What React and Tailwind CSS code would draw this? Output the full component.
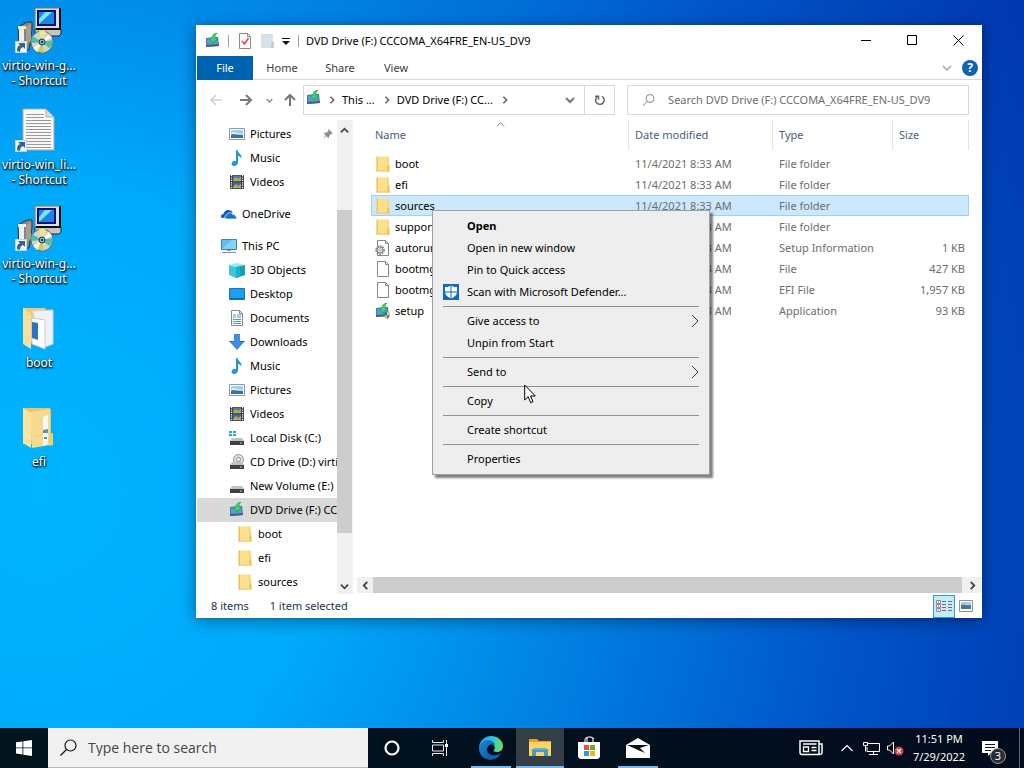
import React from 'react';

function Icon({ size = 16, className = '', children }) {
  return (
    <svg width={size} height={size} viewBox="0 0 16 16" className={`shrink-0 ${className}`} aria-hidden="true">
      {children}
    </svg>
  );
}

function FolderIcon() {
  return (
    <Icon>
      <path d="M1.500.5h12l1 9.500v5.500h-13z" fill="#fbe08d" />
      <path d="M1.500.5H3v15H1.500z" fill="#e9c766" />
      <path d="M1.500 14.500h13v1h-13z" fill="#e9c96f" />
      <path d="M12 15.500V10l2.500-1v6.500z" fill="#f0c75d" />
      <path d="M12.500.5h1v9h-1z" fill="#f0cf74" />
    </Icon>
  );
}

function DriveArrowIcon({ shield, className }) {
  return (
    <Icon className={className}>
      <path d="M1 5l12-1 1 9-13 1z" fill="#3d7cba" />
      <path d="M2 6l10-1 1 7-11 1z" fill="#5b9ad2" />
      <path d="M1 12l13-1v2L1 14z" fill="#46617a" />
      <path d="M12 0C9 .5 7 2 7 5H4l4 5 5-5h-3c0-2 0-3 2-5z" fill="#3fd56a" stroke="#178c45" strokeWidth=".6" />
      {shield && (
        <>
          <path d="M9 10l3-1.500 3 1.500c0 3-1 5-3 6-2-1-3-3-3-6z" fill="#2f6cc4" />
          <path d="M12 8.500l3 1.500c0 1 0 2-.5 2.500H12zM9.500 12.500H12V16c-1.500-.8-2.200-2-2.500-3.500z" fill="#f2ce4a" />
        </>
      )}
    </Icon>
  );
}

function PictureIcon() {
  return (
    <Icon>
      <path d="M.5 2.500h15v11H.5z" fill="#fff" stroke="#8d9aa3" />
      <path d="M2 4h12v8H2z" fill="#9bd0f2" />
      <path d="M2 9c3-3 5 0 12-1v4H2z" fill="#3f6f94" />
      <path d="M2 7c3-2 5 0 7 0l5 1v1L2 8z" fill="#d9eefa" />
    </Icon>
  );
}

function MusicIcon() {
  return (
    <Icon>
      <path d="M7 0h1.500c0 3 5 4 4 9-.5-2-2-3-3.500-3v6c0 2-1.500 4-4 4-1.500 0-2.500-1-2.500-2.200C2.500 12 4 10.500 7 11z" fill="#2296dd" />
    </Icon>
  );
}

function VideoIcon() {
  return (
    <Icon>
      <path d="M1 1h14v14H1z" fill="#3a3f45" />
      <path d="M4 1.500h8v6H4z" fill="#5578b5" />
      <path d="M4 8.500h8v6H4z" fill="#4968a5" />
      <path d="M4 6l3-3 2 2 3-2v4H4zM4 13l3-3 2 2 3-2v4H4z" fill="#b8ab45" />
      <path d="M2.500 1v14M13.500 1v14" stroke="#fff" strokeWidth="1.200" strokeDasharray="1.200 1.200" />
    </Icon>
  );
}

function OneDriveIcon() {
  return (
    <Icon>
      <path d="M1 12c-2-1-1-4 1.500-4C3 5 6 3 9 4.500 11 5 11.500 6 11.500 7L5 12z" fill="#0f5fb8" />
      <path d="M6 13c-2.500 0-3-3.500-.3-4 1-3 5-3 6-.5 1.500-.5 2.500.3 2.500 1.500 2 .5 2 3-.2 3z" fill="#1673ce" stroke="#fff" strokeWidth=".7" />
    </Icon>
  );
}

function PcIcon() {
  return (
    <Icon>
      <path d="M.5 1.500h15v10H.5z" fill="#64bdf0" stroke="#3986b7" />
      <path d="M1 11L11 2h4v9z" fill="#87d2f8" />
      <path d="M6 12h4v1H6zM1 14h14v1H1z" fill="#7897a8" />
    </Icon>
  );
}

function CubeIcon() {
  return (
    <Icon>
      <path d="M0 3l8-2 8 2-8 2z" fill="#9eeaf0" />
      <path d="M0 3l7 2v11l-7-3z" fill="#42c5d8" />
      <path d="M7 5l9-2v10l-9 3z" fill="#169fb5" />
      <path d="M7 5l4-1v11l-4 1z" fill="#1bb4c6" />
    </Icon>
  );
}

function DesktopIcon() {
  return (
    <Icon>
      <path d="M.5 2.500h15v11H.5z" fill="#1e9df2" stroke="#1579bf" />
      <path d="M1 12h14v1.500H1z" fill="#0f69ab" />
    </Icon>
  );
}

function DocumentIcon() {
  return (
    <Icon>
      <path d="M2.500.5h8l3 3v12h-11z" fill="#fff" stroke="#7f8b93" />
      <path d="M10.500.5v3h3" fill="none" stroke="#7f8b93" />
      <path d="M4 5h3M8 5h4M4 7h3M8 7h4M4 9.500h8M4 11.500h8M4 13.500h8" stroke="#4f99b9" />
    </Icon>
  );
}

function DownloadIcon() {
  return (
    <Icon>
      <path d="M5 0h6v7h5l-8 9-8-9h5z" fill="#3b8fe0" />
      <path d="M0 7h5v1H1zM11 7h5l-1 1h-4z" fill="#2b6aa8" />
    </Icon>
  );
}

function DiskIcon({ kind }) {
  return (
    <Icon>
      {kind === 'system' && <path d="M0 1h3v2H0zM4 1h3v2H4zM0 4h3v2H0zM4 4h3v2H4z" fill="#27a9c7" />}
      {kind === 'cd' && (
        <>
          <circle cx="9.500" cy="5.500" r="5" fill="#dcdcdc" stroke="#959595" />
          <circle cx="9.500" cy="5.500" r="2" fill="#fff" stroke="#8c8c8c" />
        </>
      )}
      <path d="M3 8h10l2 3H1z" fill="#bfc3c5" />
      <path d="M1 11h14v4H1z" fill="#3e4245" />
      <path d="M11 12.500h2v1h-2z" fill="#7ff09a" />
    </Icon>
  );
}

function FileIcon({ gear }) {
  return (
    <Icon>
      <path d="M2.500.5h8l3 3v12h-11z" fill="#fff" stroke="#858585" />
      <path d="M10.500.5v3h3" fill="none" stroke="#858585" />
      {gear && (
        <>
          <circle cx="5" cy="10" r="4" fill="#eee" stroke="#7a7a7a" strokeWidth="1.600" strokeDasharray="1.600 1" />
          <circle cx="5" cy="10" r="3" fill="#ddd" stroke="#8a8a8a" />
          <circle cx="5" cy="10" r="1.200" fill="#fff" stroke="#8a8a8a" strokeWidth=".6" />
        </>
      )}
    </Icon>
  );
}

function Chevron({ dir = 'down', size = 10, color = '#444', width = 2 }) {
  const paths = {
    down: 'M1 3l4 4 4-4',
    up: 'M1 7l4-4 4 4',
    left: 'M7 1L3 5l4 4',
    right: 'M3 1l4 4-4 4',
  };
  return (
    <svg width={size} height={size} viewBox="0 0 10 10" className="shrink-0" aria-hidden="true">
      <path d={paths[dir]} fill="none" stroke={color} strokeWidth={width} />
    </svg>
  );
}

function LargeIcon({ children }) {
  return (
    <svg width="48" height="48" viewBox="3 -1 48 48" className="shrink-0" aria-hidden="true">
      {children}
    </svg>
  );
}

function ShortcutBadge() {
  return (
    <>
      <path d="M3.500 34.500h11v11h-11z" fill="#f4f6f8" stroke="#c4d3df" />
      <path d="M5 44c0-4 1-5 3-6l-2-2h7v6l-2-2c-2 1-3 2-3 5z" fill="#31619f" />
    </>
  );
}

function InstallerIcon() {
  return (
    <LargeIcon>
      <path d="M6 20l9-5h5v8l-3 20H7z" fill="#858585" stroke="#333" />
      <path d="M6 19h8v3H6zM7 22h5v12H7z" fill="#eee" />
      <path d="M14 20l5-4v18l-5 4z" fill="#a79d93" />
      <path d="M23 22h26v5l-2 2H23z" fill="#c9c6c1" stroke="#222" />
      <path d="M23 1h25v21H23z" fill="#dedede" stroke="#777" />
      <path d="M48 1v21H24" fill="none" stroke="#111" strokeWidth="2" />
      <path d="M25 3h19v16H25z" fill="#07136e" />
      <path d="M27 5h15v12H27z" fill="#1687e8" />
      <path d="M27 17L40 5h-7l-6 7z" fill="#7de3ff" />
      <circle cx="30" cy="35" r="11" fill="#d3d3cb" stroke="#65645f" />
      <path d="M30 35l-3-11c3-1 5-1 7 1z" fill="#f0e68b" />
      <path d="M30 35L20 29l-1 7z" fill="#4bbcad" />
      <path d="M30 35l11-2c0 4-1 6-4 8z" fill="#56bda4" />
      <path d="M30 35l2 11-8-2z" fill="#c3cf5e" />
      <path d="M30 35l7-8 3 4z" fill="#fff" />
      <path d="M30 35l-9 6 4 4z" fill="#f4f4ff" />
      <circle cx="30" cy="35" r="3" fill="#5ac3dd" stroke="#333" />
      <circle cx="30" cy="35" r="1" fill="#111" />
      <ShortcutBadge />
    </LargeIcon>
  );
}

function TextFileIcon() {
  return (
    <LargeIcon>
      <path d="M11 3h23l8 8v33H11z" fill="#f8f8f7" stroke="#a9a9a9" />
      <path d="M34 3v8h8z" fill="#dcdcdc" stroke="#a9a9a9" />
      <path
        d="M14 8.500h18M14 11.500h18M14 14.500h25M14 17.500h25M14 20.500h25M14 23.500h25M14 26.500h25M14 29.500h25M14 32.500h25M14 35.500h25M14 38.500h25M14 41.500h25"
        stroke="#9a9a9a"
      />
      <ShortcutBadge />
    </LargeIcon>
  );
}

function BootFolderIcon() {
  return (
    <LargeIcon>
      <path d="M11 4h22l2 2v32H11z" fill="#eccb72" />
      <path d="M34 5h7v7h-7z" fill="#29b6a8" />
      <path d="M20 7l21-1v34l-8 3z" fill="#eef2f4" stroke="#ccd5da" />
      <path d="M20 14l13 2v29l-13-5z" fill="#fff" stroke="#c4cdd2" />
      <path d="M20 18l6 1v17l-6-2z" fill="#2b74bf" />
      <path d="M11 4l8 6v35l-8-5z" fill="#fae09a" />
    </LargeIcon>
  );
}

function EfiFolderIcon() {
  return (
    <LargeIcon>
      <path d="M11 5h27l1 2v34H11z" fill="#e9c468" />
      <path d="M18 9l20-3v36l-18 3z" fill="#f6da8d" />
      <path d="M31 14l5-2v29l-5 2z" fill="#f5f7f8" />
      <path d="M31 27l5-1v4h-5zM32 34h3v2h-3z" fill="#5097b5" />
      <path d="M37 31l4-1v12l-4 1z" fill="#f4ce69" />
      <path d="M11 5l8 5v35l-8-5z" fill="#fbe3a0" />
    </LargeIcon>
  );
}

const desktopItems = [
  { label: ['virtio-win-g...', '- Shortcut'], icon: <InstallerIcon /> },
  { label: ['virtio-win_li...', '- Shortcut'], icon: <TextFileIcon /> },
  { label: ['virtio-win-g...', '- Shortcut'], icon: <InstallerIcon /> },
  { label: ['boot'], icon: <BootFolderIcon /> },
  { label: ['efi'], icon: <EfiFolderIcon /> },
];

function DesktopIcons() {
  return (
    <div className="flex w-[78px] flex-col pt-1.5">
      {desktopItems.map((item, i) => (
        <button key={i} type="button" className="flex h-[99px] flex-col items-center">
          {item.icon}
          <span className="mt-1 whitespace-nowrap text-[12px] leading-[15px] text-white [text-shadow:0_1px_2px_#000,1px_1px_2px_#000]">
            {item.label.map((line) => (
              <span key={line} className="block">{line}</span>
            ))}
          </span>
        </button>
      ))}
    </div>
  );
}

function TitleBar() {
  return (
    <header className="flex h-[31px] shrink-0 items-center pr-px text-black">
      <DriveArrowIcon className="ml-[9px]" />
      <span className="ml-[7px] h-3 w-px bg-gray-400" />
      <button type="button" aria-label="Properties" className="ml-2">
        <Icon>
          <path d="M2.500.5h8l3 3v12h-11z" fill="#fff" stroke="#8a8a8a" />
          <path d="M10.500.5v3h3" fill="none" stroke="#8a8a8a" />
          <path d="M5 8l2.500 3L11.500 5" fill="none" stroke="#e0454a" strokeWidth="1.500" />
        </Icon>
      </button>
      <button type="button" aria-label="New folder" className="ml-[7px]">
        <Icon>
          <path d="M1 1h12v14H1z" fill="#d7e0ec" />
          <path d="M11 9h3v6h-3z" fill="#c4d0df" />
        </Icon>
      </button>
      <button type="button" aria-label="Customize Quick Access Toolbar" className="ml-[5px]">
        <svg width="10" height="10" viewBox="0 0 10 10">
          <path d="M1 2h8v1H1zM1 5h8L5 9z" fill="#111" />
        </svg>
      </button>
      <span className="ml-[7px] h-3 w-px bg-gray-400" />
      <h1 className="ml-[7px] flex-1 truncate">DVD Drive (F:) CCCOMA_X64FRE_EN-US_DV9</h1>
      <button type="button" aria-label="Minimize" className="flex h-full w-[46px] items-center justify-center">
        <svg width="11" height="11"><path d="M0 5.500h10" stroke="#000" /></svg>
      </button>
      <button type="button" aria-label="Maximize" className="flex h-full w-[46px] items-center justify-center">
        <svg width="11" height="11"><path d="M.5.5h9v9h-9z" fill="none" stroke="#000" /></svg>
      </button>
      <button type="button" aria-label="Close" className="flex h-full w-[46px] items-center justify-center">
        <svg width="11" height="11"><path d="M.5.5l10 10M10.500.5l-10 10" stroke="#000" /></svg>
      </button>
    </header>
  );
}

function RibbonTabs() {
  return (
    <div className="flex h-6 shrink-0 items-stretch border-b border-[#dadbdc] pl-px text-[#3b3b3b]">
      <button type="button" className="-mb-px w-14 bg-[#0063b1] text-white">File</button>
      <button type="button" className="w-[58px]">Home</button>
      <button type="button" className="w-[58px]">Share</button>
      <button type="button" className="w-[54px]">View</button>
      <button type="button" aria-label="Expand the Ribbon" className="ml-auto mr-2.5">
        <Chevron color="#a5a5a5" width={1.5} />
      </button>
      <button type="button" aria-label="Help" className="mr-1 flex items-center">
        <span className="flex size-4 items-center justify-center rounded-full bg-[#0f63b5] text-[12px] font-bold text-white">?</span>
      </button>
    </div>
  );
}

function AddressRow() {
  return (
    <div className="flex h-10 shrink-0 items-center px-[13px]">
      <button type="button" aria-label="Back">
        <svg width="14" height="14"><path d="M13 7H2M7 2L2 7l5 5" fill="none" stroke="#d0d0d0" strokeWidth="1.500" /></svg>
      </button>
      <button type="button" aria-label="Forward" className="ml-4">
        <svg width="14" height="14"><path d="M1 7h11M7 2l5 5-5 5" fill="none" stroke="#777" strokeWidth="2" /></svg>
      </button>
      <button type="button" aria-label="Recent locations" className="ml-[13px]">
        <Chevron size={7} color="#888" />
      </button>
      <button type="button" aria-label="Up" className="ml-2.5">
        <svg width="14" height="14"><path d="M7 13V2M2 7l5-5 5 5" fill="none" stroke="#777" strokeWidth="2" /></svg>
      </button>
      <div className="ml-1.5 flex h-[30px] min-w-0 flex-[312] items-center border border-[#d9d9d9] text-black">
        <DriveArrowIcon className="ml-0.5 mb-1" />
        <span className="ml-1.5"><Chevron dir="right" size={8} color="#666" /></span>
        <button type="button" className="ml-1.5 whitespace-nowrap">This ...</button>
        <span className="ml-2"><Chevron dir="right" size={8} color="#666" /></span>
        <button type="button" className="ml-1.5 whitespace-nowrap">DVD Drive (F:) CC...</button>
        <span className="ml-2"><Chevron dir="right" size={8} color="#666" /></span>
        <button type="button" aria-label="Previous locations" className="ml-auto mr-[9px]">
          <Chevron color="#777" />
        </button>
        <button type="button" aria-label="Refresh" className="flex h-full w-[30px] items-center justify-center border-l border-[#d9d9d9]">
          <svg width="12" height="12" viewBox="0 0 12 12">
            <path d="M3.500 2.500A4.300 4.300 0 1 0 8 2.300" fill="none" stroke="#666" strokeWidth="1.500" />
            <path d="M1 2.200h3.500v3.500" fill="none" stroke="#666" strokeWidth="1.500" />
          </svg>
        </button>
      </div>
      <label className="ml-3 flex h-[30px] min-w-0 flex-[342] items-center border border-[#d9d9d9]">
        <svg width="14" height="14" className="ml-3.5 shrink-0">
          <circle cx="8" cy="5.500" r="4" fill="none" stroke="#888" />
          <path d="M5 8.500L1 13" stroke="#888" />
        </svg>
        <input
          type="text"
          aria-label="Search"
          placeholder="Search DVD Drive (F:) CCCOMA_X64FRE_EN-US_DV9"
          className="ml-3 min-w-0 flex-1 bg-transparent outline-none placeholder:text-[#6d6d6d]"
        />
      </label>
    </div>
  );
}

const navItems = [
  { label: 'Pictures', icon: <PictureIcon />, level: 1, pinned: true },
  { label: 'Music', icon: <MusicIcon />, level: 1 },
  { label: 'Videos', icon: <VideoIcon />, level: 1 },
  { label: 'OneDrive', icon: <OneDriveIcon />, level: 0 },
  { label: 'This PC', icon: <PcIcon />, level: 0 },
  { label: '3D Objects', icon: <CubeIcon />, level: 1 },
  { label: 'Desktop', icon: <DesktopIcon />, level: 1 },
  { label: 'Documents', icon: <DocumentIcon />, level: 1 },
  { label: 'Downloads', icon: <DownloadIcon />, level: 1 },
  { label: 'Music', icon: <MusicIcon />, level: 1 },
  { label: 'Pictures', icon: <PictureIcon />, level: 1 },
  { label: 'Videos', icon: <VideoIcon />, level: 1 },
  { label: 'Local Disk (C:)', icon: <DiskIcon kind="system" />, level: 1 },
  { label: 'CD Drive (D:) virtio-win', icon: <DiskIcon kind="cd" />, level: 1 },
  { label: 'New Volume (E:)', icon: <DiskIcon />, level: 1 },
  { label: 'DVD Drive (F:) CCCOMA', icon: <DriveArrowIcon />, level: 1, selected: true },
  { label: 'boot', icon: <FolderIcon />, level: 2 },
  { label: 'efi', icon: <FolderIcon />, level: 2 },
  { label: 'sources', icon: <FolderIcon />, level: 2 },
];

const levelClasses = ['pl-6 mt-2', 'pl-8', 'pl-10'];

function NavPane() {
  return (
    <div className="flex w-[157px] shrink-0 border-r border-gray-100">
      <nav className="flex min-w-0 flex-1 flex-col overflow-hidden pl-px pt-0.5">
        {navItems.map((item, i) => (
          <a
            key={i}
            href="#"
            className={`flex h-6 shrink-0 items-center gap-[5px] overflow-hidden whitespace-nowrap text-black ${levelClasses[item.level]} ${item.selected ? 'bg-[#d9d9d9]' : ''}`}
          >
            {item.icon}
            {item.label}
            {item.pinned && (
              <Icon size={10} className="ml-auto mr-1">
                <path d="M9 0l7 7-2 1-1-1-3 4-1 4-4-4-5 5 4-6-3-4 4 0 4-3-1-1z" fill="#8b8f92" />
              </Icon>
            )}
          </a>
        ))}
      </nav>
      <div className="flex w-[15px] shrink-0 flex-col bg-[#f0f0f0]">
        <button type="button" aria-label="Scroll up" className="flex h-5 items-center justify-center"><Chevron dir="up" size={9} /></button>
        <div className="flex-[70]" />
        <div className="flex-[322] bg-[#cdcdcd]" />
        <div className="flex-[45]" />
        <button type="button" aria-label="Scroll down" className="flex h-4 items-center justify-center"><Chevron size={9} /></button>
      </div>
    </div>
  );
}

const files = [
  { name: 'boot', type: 'File folder', size: '', icon: <FolderIcon /> },
  { name: 'efi', type: 'File folder', size: '', icon: <FolderIcon /> },
  { name: 'sources', type: 'File folder', size: '', icon: <FolderIcon />, selected: true },
  { name: 'support', type: 'File folder', size: '', icon: <FolderIcon /> },
  { name: 'autorun', type: 'Setup Information', size: '1 KB', icon: <FileIcon gear /> },
  { name: 'bootmgr', type: 'File', size: '427 KB', icon: <FileIcon /> },
  { name: 'bootmgr.efi', type: 'EFI File', size: '1,957 KB', icon: <FileIcon /> },
  { name: 'setup', type: 'Application', size: '93 KB', icon: <DriveArrowIcon shield /> },
];

function HeaderCell({ className = '', label, sorted }) {
  return (
    <th scope="col" className={`relative p-0 text-left align-top font-normal ${className}`}>
      {sorted && (
        <span className="absolute inset-x-0 top-0 flex justify-center"><Chevron dir="up" size={9} color="#777" width={1} /></span>
      )}
      <div className={`flex h-[30px] items-center border-r border-[#e5e5e5] text-[#4c607a] ${sorted ? 'pl-1' : 'pl-1.5'}`}>{label}</div>
    </th>
  );
}

function FileList() {
  return (
    <main className="flex min-w-0 flex-1 flex-col">
      <div className="min-h-0 flex-1 overflow-hidden pl-[18px] pr-[13px]">
        <table className="w-full table-fixed border-collapse">
          <thead>
            <tr className="h-[33px]">
              <HeaderCell label="Name" sorted />
              <HeaderCell label="Date modified" className="w-36" />
              <HeaderCell label="Type" className="w-[120px]" />
              <HeaderCell label="Size" className="w-[76px]" />
            </tr>
          </thead>
          <tbody>
            {files.map((file) => (
              <tr
                key={file.name}
                className={`h-[21px] text-[#6d6d6d] ${file.selected ? 'bg-[#cce8ff] outline outline-1 -outline-offset-1 outline-[#99d1ff]' : ''}`}
              >
                <td className="p-0 pl-1 text-black">
                  <span className="flex items-center gap-1">
                    {file.icon}
                    {file.name}
                  </span>
                </td>
                <td className="whitespace-nowrap p-0 pl-1.5">11/4/2021 8:33 AM</td>
                <td className="whitespace-nowrap p-0 pl-1.5">{file.type}</td>
                <td className="whitespace-nowrap p-0 pr-1 text-right">{file.size}</td>
              </tr>
            ))}
          </tbody>
        </table>
      </div>
      <div className="mb-px ml-1 flex h-4 shrink-0 bg-[#f0f0f0]">
        <button type="button" aria-label="Scroll left" className="flex w-4 items-center justify-center"><Chevron dir="left" size={9} /></button>
        <div className="flex-1 bg-[#cdcdcd]" />
        <button type="button" aria-label="Scroll right" className="flex w-5 items-center justify-center"><Chevron dir="right" size={9} /></button>
      </div>
    </main>
  );
}

function StatusBar() {
  return (
    <footer className="flex h-6 shrink-0 items-center pl-[15px] pr-2 text-[#26334d]">
      <span>8 items</span>
      <span className="ml-[21px]">1 item selected</span>
      <button type="button" aria-label="Details view" className="ml-auto flex h-[23px] w-[22px] items-center justify-center border border-[#26a0da] bg-[#cbe8f6]">
        <svg width="18" height="14" viewBox="0 0 18 14">
          <path d="M1.500 1.500h4v3h-4zM1.500 5.500h4v3h-4zM1.500 9.500h4v3h-4z" fill="#fff" stroke="#93839b" />
          <path d="M3 3h1M3 7h1M3 11h1" stroke="#2e6e9c" />
          <path d="M7 2.500h10M7 5.500h10M7 8.500h10M7 11.500h10" stroke="#60737f" strokeDasharray="4 2" />
        </svg>
      </button>
      <button type="button" aria-label="Large icons view" className="ml-[3px] flex w-4 justify-center">
        <svg width="14" height="12" viewBox="0 0 14 12">
          <path d="M.5.5h13v11H.5z" fill="#fff" stroke="#88949b" />
          <path d="M2 2h10v7H2z" fill="#a8cddd" />
          <path d="M2 5c3-1 5 1 10 0v4H2z" fill="#4d7488" />
        </svg>
      </button>
    </footer>
  );
}

function ExplorerWindow() {
  return (
    <section className="absolute bottom-[110px] left-[196px] right-[42px] top-[25px] flex flex-col bg-white shadow-[0_2px_14px_rgba(0,0,0,0.45)]">
      <TitleBar />
      <RibbonTabs />
      <AddressRow />
      <div className="flex min-h-0 flex-1">
        <NavPane />
        <FileList />
      </div>
      <StatusBar />
    </section>
  );
}

const menuItems = [
  { label: 'Open', bold: true },
  { label: 'Open in new window' },
  { label: 'Pin to Quick access' },
  { label: 'Scan with Microsoft Defender...', defender: true },
  { separator: true },
  { label: 'Give access to', submenu: true },
  { label: 'Unpin from Start' },
  { separator: true },
  { label: 'Send to', submenu: true },
  { separator: true },
  { label: 'Copy' },
  { separator: true },
  { label: 'Create shortcut' },
  { separator: true },
  { label: 'Properties' },
];

function ContextMenu() {
  return (
    <div
      role="menu"
      className="absolute left-[432px] top-[210px] flex w-[278px] flex-col border border-[#a0a0a0] bg-[#eeeeee] py-1 text-black shadow-[3px_3px_2px_rgba(0,0,0,0.5)]"
    >
      {menuItems.map((item, i) =>
        item.separator ? (
          <div key={i} role="separator" className="mx-2.5 flex h-[7px] items-center">
            <div className="h-px flex-1 bg-[#919191]" />
          </div>
        ) : (
          <button key={i} type="button" role="menuitem" className="flex h-[22px] items-center pl-2.5 pr-2.5 text-left">
            <span className="w-6">
              {item.defender && (
                <Icon>
                  <path d="M0 0h16v16H0z" fill="#0f6cbd" />
                  <path d="M8 1.500c2 1 3.500 1.500 6 1.500v5c0 3-2.500 5-6 6.500C4.500 13 2 11 2 8V3c2.500 0 4-.5 6-1.500z" fill="#fff" />
                  <path d="M8 1v14M1 8h14" stroke="#0f6cbd" strokeWidth="1" />
                </Icon>
              )}
            </span>
            <span className={item.bold ? 'font-bold' : ''}>{item.label}</span>
            {item.submenu && (
              <svg width="8" height="14" className="ml-auto"><path d="M1 1l6 6-6 6" fill="none" stroke="#333" /></svg>
            )}
          </button>
        ),
      )}
    </div>
  );
}

function Cursor() {
  return (
    <svg width="13" height="20" viewBox="0 0 13 20" className="pointer-events-none absolute left-[524px] top-[384px]" aria-hidden="true">
      <path d="M.7 1v15l3.500-3.300 2.500 6 2.300-1-2.500-5.700h4.800z" fill="#fff" stroke="#000" strokeWidth="1" />
    </svg>
  );
}

function TaskButton({ label, running, active, children }) {
  return (
    <button
      type="button"
      aria-label={label}
      className={`relative flex h-full w-12 shrink-0 items-center justify-center ${active ? 'bg-[#353f48]' : ''}`}
    >
      {children}
      {running && <span className={`absolute bottom-0 h-0.5 bg-[#76b9ed] ${active ? 'inset-x-0' : 'inset-x-1'}`} />}
    </button>
  );
}

function Taskbar() {
  return (
    <footer className="flex h-10 shrink-0 items-center bg-gradient-to-r from-[#02151f] to-[#020b1c] text-white">
      <TaskButton label="Start">
        <svg width="16" height="16" viewBox="0 0 16 16">
          <path d="M0 2.300l6.500-.9v6.100H0zM7.300 1.300L16 0v7.500H7.300zM0 8.300h6.500v6.200L0 13.600zM7.300 8.300H16V16l-8.700-1.300z" fill="#fff" />
        </svg>
      </TaskButton>
      <label className="flex h-full min-w-0 max-w-[320px] flex-1 items-center border-b border-[#b9b9b9] bg-[#f1f1f1]">
        <svg width="17" height="17" viewBox="0 0 17 17" className="ml-3 shrink-0">
          <circle cx="10.500" cy="6.500" r="5.500" fill="none" stroke="#111" strokeWidth="1.200" />
          <path d="M6.500 10.500L.5 16.500" stroke="#111" strokeWidth="1.200" />
        </svg>
        <input
          type="text"
          aria-label="Type here to search"
          placeholder="Type here to search"
          className="ml-[11px] min-w-0 flex-1 bg-transparent font-['Open_Sans','Noto_Sans',sans-serif] text-[14px] outline-none placeholder:text-[#444]"
        />
      </label>
      <TaskButton label="Cortana">
        <svg width="16" height="16"><circle cx="8" cy="8" r="6.500" fill="none" stroke="#fff" strokeWidth="2.200" /></svg>
      </TaskButton>
      <TaskButton label="Task View">
        <svg width="17" height="16" viewBox="0 0 17 16">
          <path d="M.5 0v2.500h11V0M.5 16v-2.500h11V16M.5 5h11v6H.5zM14.500 0v16" fill="none" stroke="#e8e8e8" />
          <path d="M13 4h3v3h-3z" fill="#fff" />
        </svg>
      </TaskButton>
      <div className="ml-[3px] flex h-full gap-px">
        <TaskButton label="Microsoft Edge" running>
          <svg width="24" height="24" viewBox="0 0 24 24">
            <defs>
              <linearGradient id="edgeTop" x1="0" x2="1" y1=".3" y2=".5">
                <stop offset="0" stopColor="#1f9de8" />
                <stop offset=".5" stopColor="#2fc3df" />
                <stop offset="1" stopColor="#6be05c" />
              </linearGradient>
              <linearGradient id="edgeLow" x1="0" x2="1" y1="0" y2="1">
                <stop offset="0" stopColor="#1c88dc" />
                <stop offset="1" stopColor="#0f4f9e" />
              </linearGradient>
            </defs>
            <path d="M0 11C1 4 6 0 12 0c7 0 12 5 12 10 0 4-3 6-6 6-3 0-4-1-3-2 2-3 0-6-3-6C7 8 3 9 0 11z" fill="url(#edgeTop)" />
            <path d="M0 12C1 7 5 4 9 4c4 0 7 3 7 5-4-2-8 1-8 5 0 5 4 8 8 8-1 1-3 2-4 2C5 24 0 19 0 12z" fill="url(#edgeLow)" />
            <path d="M8 13c0 5 5 7 9 6 2 0 4-1 5-2 0 1-3 6-8 6-5-1-8-5-6-10z" fill="#155fad" />
          </svg>
        </TaskButton>
        <TaskButton label="File Explorer" running active>
          <svg width="22" height="20" viewBox="0 0 22 20">
            <path d="M0 1h8l2 2h12v4H0z" fill="#e0a02f" />
            <path d="M0 4h22v14H0z" fill="#fbd464" />
            <path d="M3 11h16v7h-4v-4H7v4H3z" fill="#4b9ac6" />
            <path d="M5 10h12v2H5z" fill="#5fb0da" />
          </svg>
        </TaskButton>
        <TaskButton label="Microsoft Store">
          <svg width="24" height="24" viewBox="0 0 24 24">
            <path d="M8 6V4c0-4 8-4 8 0v2M10 6V3c0-3 5-3 7 0" fill="none" stroke="#ddd" strokeWidth="1.200" />
            <path d="M1 6h22v15l-2 2H3l-2-2z" fill="#fff" />
            <path d="M7 9h5v5H7z" fill="#e8532d" />
            <path d="M13 9h5v5h-5z" fill="#70a82e" />
            <path d="M7 15h5v5H7z" fill="#2b9bd6" />
            <path d="M13 15h5v5h-5z" fill="#f3b619" />
          </svg>
        </TaskButton>
        <TaskButton label="Mail" running>
          <svg width="24" height="20" viewBox="0 0 24 20">
            <path d="M0 7l12-7 12 7v13H0z" fill="#fff" />
            <path d="M1 7h22l-9 3 5 5-7-3z" fill="#06121b" />
          </svg>
        </TaskButton>
      </div>
      <div className="ml-auto flex h-full items-center">
        <button type="button" aria-label="News and interests">
          <svg width="24" height="16" viewBox="0 0 24 16" fill="none" stroke="#fff">
            <path d="M1 1h19v13.500H3c-2 0-2-1-2-2zM20 4h3v8.500c0 2-1 2-3 2" strokeWidth="1.500" />
            <path d="M4 4h13.500M12.500 7.500h5M12.500 10.500h5" strokeWidth="1.300" />
            <path d="M4.500 7h5v4.500h-5z" strokeWidth="1.300" />
          </svg>
        </button>
        <button type="button" aria-label="Show hidden icons" className="ml-[18px]">
          <svg width="12" height="8"><path d="M.5 7L6 1.500 11.500 7" fill="none" stroke="#fff" strokeWidth="1.200" /></svg>
        </button>
        <button type="button" aria-label="Network" className="ml-2.5">
          <svg width="17" height="15" viewBox="0 0 17 15" fill="none" stroke="#fff">
            <path d="M5 2.500h11.500v8H4V6M10.500 10.500v3M6 13.500h9M.5 1.500h4v3h-4zM2.500 4.500v6" />
          </svg>
        </button>
        <button type="button" aria-label="Volume muted" className="ml-[7px]">
          <svg width="17" height="15" viewBox="0 0 17 15">
            <path d="M.5 5v4h2l4 4V1l-4 4z" fill="none" stroke="#fff" />
            <circle cx="12" cy="10" r="4.500" fill="#d83b45" />
            <path d="M10 8l4 4M14 8l-4 4" stroke="#fff" strokeWidth="1.200" />
          </svg>
        </button>
        <button type="button" className="ml-2 w-[54px] text-center leading-[18px]">
          <span className="block whitespace-nowrap">11:51 PM</span>
          <span className="block whitespace-nowrap">7/29/2022</span>
        </button>
        <button type="button" aria-label="Notifications" className="relative ml-4 mr-[11px] h-6 w-[26px]">
          <svg width="17" height="17" viewBox="0 0 17 17">
            <path d="M0 1h16v12H9l-3 3v-3H0z" fill="#fff" />
            <path d="M3 4.500h10M3 7.500h10M3 10.500h6" stroke="#101820" />
          </svg>
          <span className="absolute -bottom-1 right-0.5 flex size-4 items-center justify-center rounded-full border border-[#9a9a9a] bg-[#2a2d31]">3</span>
        </button>
        <span className="mr-1 h-full w-px bg-[#5b6470]" />
      </div>
    </footer>
  );
}

export default function App() {
  return (
    <div className="flex h-screen flex-col overflow-hidden bg-[radial-gradient(ellipse_105%_150%_at_4%_64%,#00b4ff_0%,#00a8fa_28%,#007ce0_53%,#0054c8_76%,#0038b0_100%)] font-['Noto_Sans','Open_Sans',sans-serif] text-[11px] leading-4">
      <div className="relative min-h-0 flex-1">
        <DesktopIcons />
        <ExplorerWindow />
        <ContextMenu />
        <Cursor />
      </div>
      <Taskbar />
    </div>
  );
}
